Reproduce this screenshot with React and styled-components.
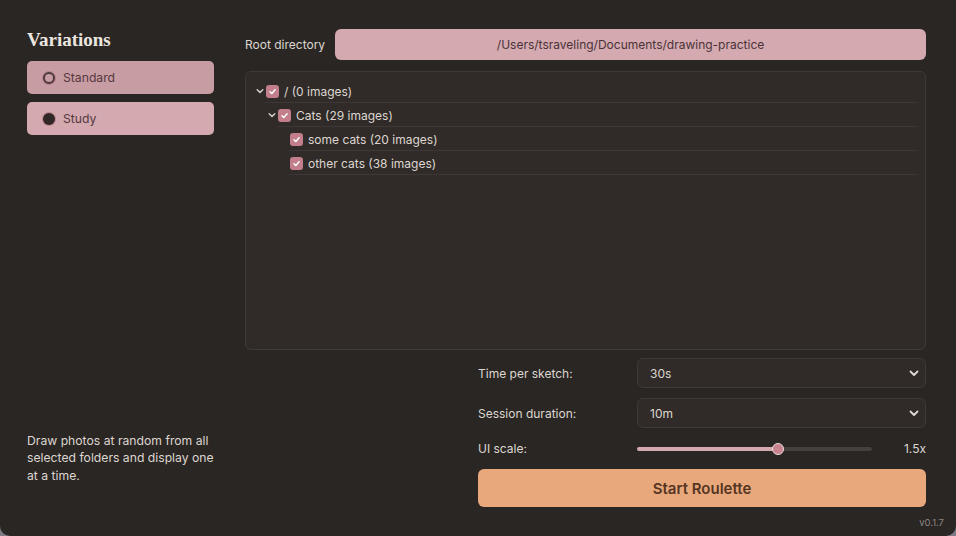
import styled, { createGlobalStyle } from "styled-components";

const GlobalStyle = createGlobalStyle`
  html, body {
    margin: 0;
    padding: 0;
    background: #7d7b85;
  }
  * { box-sizing: border-box; }
`;

const Window = styled.div`
  width: 956px;
  height: 536px;
  background: #2a2624;
  border-radius: 0 0 10px 10px;
  overflow: hidden;
  display: grid;
  grid-template-columns: 187px 1fr;
  column-gap: 31px;
  padding: 29px 30px 0 27px;
  font-family: Inter, "Noto Sans", sans-serif;
  font-size: 12px;
  color: #ddd6d0;
  position: relative;
`;

const Sidebar = styled.aside`
  display: flex;
  flex-direction: column;
  padding-bottom: 52px;
`;

const Title = styled.h1`
  font-family: "Liberation Serif", "DejaVu Serif", serif;
  font-weight: 700;
  font-size: 19px;
  margin: 0 0 10px;
  color: #ece6e0;
  line-height: 22px;
`;

const VariantList = styled.div`
  display: flex;
  flex-direction: column;
  gap: 8px;
`;

const Variant = styled.button`
  height: 33px;
  border: 0;
  border-radius: 5px;
  background: ${(p) => (p.$active ? "#c89ca3" : "#d4a9b0")};
  color: #55393f;
  font-family: inherit;
  font-size: 12.2px;
  display: flex;
  align-items: center;
  gap: 8px;
  padding: 0 0 0 16px;
  text-align: left;
`;

const Radio = styled.span`
  width: 12px;
  height: 12px;
  border-radius: 50%;
  background: ${(p) => (p.$hollow ? "#c89ca3" : "#2f2826")};
  border: ${(p) => (p.$hollow ? "2.5px solid #4a3a3d" : "none")};
  box-shadow: 0 0 0 1px rgba(180, 110, 120, 0.6);
`;

const Description = styled.p`
  margin: auto 0 0;
  line-height: 17.5px;
  font-size: 12.2px;
`;

const Main = styled.main`
  display: flex;
  flex-direction: column;
`;

const RootRow = styled.div`
  display: flex;
  align-items: center;
  gap: 10px;
  height: 31px;
`;

const Label = styled.span`
  white-space: nowrap;
`;

const PathField = styled.div`
  flex: 1;
  height: 31px;
  border-radius: 6px;
  background: #d4a9b0;
  color: #4a3338;
  display: flex;
  align-items: center;
  justify-content: center;
`;

const TreePanel = styled.div`
  margin-top: 11px;
  height: 279px;
  background: #302b28;
  border: 1px solid #403a37;
  border-radius: 6px;
  padding: 7px 8px 0 10px;
`;

const TreeRow = styled.div`
  position: relative;
  height: 24px;
  display: flex;
  align-items: center;
  gap: 2px;
  margin-left: ${(p) => p.$depth * 12}px;
  color: #ddd6d0;

  &::after {
    content: "";
    position: absolute;
    left: 9px;
    right: 0;
    bottom: 0;
    height: 1px;
    background: #3d3835;
  }
`;

const Chevron = styled.span`
  width: 8px;
  display: flex;
  align-items: center;
  justify-content: center;
`;

const Check = styled.span`
  width: 13px;
  height: 13px;
  border-radius: 3px;
  background: #c27f8b;
  display: flex;
  align-items: center;
  justify-content: center;
  margin-right: 3px;
`;

const Controls = styled.div`
  margin: 8px 0 0 233px;
  display: grid;
  grid-template-columns: 159px 1fr;
  align-items: center;
  row-gap: 10px;
`;

const Select = styled.div`
  height: 30px;
  border: 1px solid #403a37;
  background: #302b28;
  border-radius: 6px;
  display: flex;
  align-items: center;
  justify-content: space-between;
  padding: 0 6px 0 12px;
  color: #ddd6d0;
`;

const SliderRow = styled.div`
  display: flex;
  align-items: center;
  height: 21px;
`;

const Track = styled.div`
  position: relative;
  width: 235px;
  height: 4px;
  border-radius: 2px;
  background: #45403c;
`;

const Fill = styled.div`
  height: 100%;
  border-radius: 2px;
  background: #d4a9b0;
`;

const Thumb = styled.div`
  position: absolute;
  top: 50%;
  width: 12px;
  height: 12px;
  border-radius: 50%;
  background: #c8838f;
  border: 1.5px solid #eadde0;
  transform: translate(-50%, -50%);
`;

const Value = styled.span`
  margin-left: auto;
`;

const StartButton = styled.button`
  grid-column: 1 / -1;
  height: 38px;
  border: 0;
  border-radius: 6px;
  background: #e8a87c;
  color: #553522;
  font-family: inherit;
  font-weight: 600;
  font-size: 15px;
`;

const Version = styled.span`
  position: absolute;
  right: 12px;
  bottom: 8px;
  font-size: 9.5px;
  color: #8c8581;
`;

const ChevronDown = ({ size = 8, color = "#d8d2cc" }) => (
  <svg width={size} height={size} viewBox="0 0 10 10">
    <path d="M1.5 3.5 L5 7 L8.5 3.5" fill="none" stroke={color} strokeWidth="1.8" strokeLinecap="round" strokeLinejoin="round" />
  </svg>
);

const CheckMark = () => (
  <svg width="9" height="9" viewBox="0 0 10 10">
    <path d="M2.2 5.3 L4.2 7.2 L7.9 3" fill="none" stroke="#fff" strokeWidth="1.6" strokeLinecap="round" strokeLinejoin="round" />
  </svg>
);

const tree = [
  { depth: 0, label: "/ (0 images)", open: true },
  { depth: 1, label: "Cats (29 images)", open: true },
  { depth: 2, label: "some cats (20 images)" },
  { depth: 2, label: "other cats (38 images)" },
];

export default function App() {
  const scale = 0.6;
  return (
    <>
      <GlobalStyle />
      <Window>
        <Sidebar>
          <Title>Variations</Title>
          <VariantList>
            <Variant $active>
              <Radio $hollow />
              Standard
            </Variant>
            <Variant>
              <Radio />
              Study
            </Variant>
          </VariantList>
          <Description>
            Draw photos at random from all selected folders and display one at a time.
          </Description>
        </Sidebar>

        <Main>
          <RootRow>
            <Label>Root directory</Label>
            <PathField>/Users/tsraveling/Documents/drawing-practice</PathField>
          </RootRow>

          <TreePanel>
            {tree.map((node) => (
              <TreeRow key={node.label} $depth={node.depth}>
                <Chevron>{node.open && <ChevronDown />}</Chevron>
                <Check>
                  <CheckMark />
                </Check>
                {node.label}
              </TreeRow>
            ))}
          </TreePanel>

          <Controls>
            <Label>Time per sketch:</Label>
            <Select>
              30s
              <ChevronDown size={10} color="#e0dad4" />
            </Select>
            <Label>Session duration:</Label>
            <Select>
              10m
              <ChevronDown size={10} color="#e0dad4" />
            </Select>
            <Label>UI scale:</Label>
            <SliderRow>
              <Track>
                <Fill style={{ width: `${scale * 100}%` }} />
                <Thumb style={{ left: `${scale * 100}%` }} />
              </Track>
              <Value>1.5x</Value>
            </SliderRow>
            <StartButton>Start Roulette</StartButton>
          </Controls>
        </Main>
        <Version>v0.1.7</Version>
      </Window>
    </>
  );
}
